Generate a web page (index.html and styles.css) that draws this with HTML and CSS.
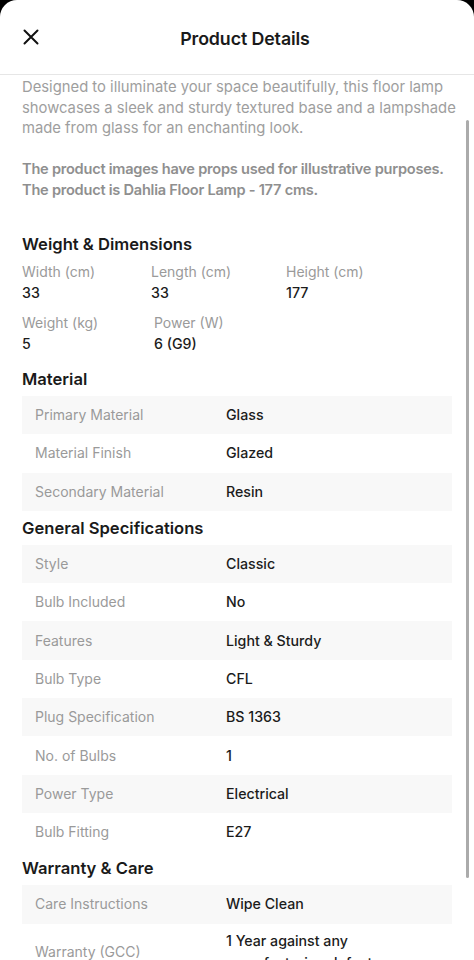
FILE: index.html
```html
<!DOCTYPE html>
<html lang="en">
<head>
<meta charset="utf-8">
<title>Product Details</title>
<link rel="stylesheet" href="styles.css">
</head>
<body>
<div class="sheet">
  <header class="topbar">
    <button class="close" aria-label="Close">
      <svg width="16" height="16" viewBox="0 0 16 16"><path d="M1.5 1.5 L14.5 14.5 M14.5 1.5 L1.5 14.5" stroke="#111" stroke-width="2" stroke-linecap="round"/></svg>
    </button>
    <h1 class="title">Product Details</h1>
  </header>
  <main class="content">
    <p class="desc">Designed to illuminate your space beautifully, this floor lamp showcases a sleek and sturdy textured base and a lampshade made from glass for an enchanting look.<br><br><b>The product images have props used for illustrative purposes. The product is Dahlia Floor Lamp - 177 cms.</b></p>

    <h2 class="section-title first">Weight &amp; Dimensions</h2>
    <div class="dims">
      <div class="dim-row">
        <div class="dim w1"><span class="dlabel">Width (cm)</span><span class="dval">33</span></div>
        <div class="dim w2"><span class="dlabel">Length (cm)</span><span class="dval">33</span></div>
        <div class="dim"><span class="dlabel">Height (cm)</span><span class="dval">177</span></div>
      </div>
      <div class="dim-row">
        <div class="dim w3"><span class="dlabel">Weight (kg)</span><span class="dval">5</span></div>
        <div class="dim"><span class="dlabel">Power (W)</span><span class="dval">6 (G9)</span></div>
      </div>
    </div>

    <h2 class="section-title">Material</h2>
    <div class="table">
      <div class="row"><span class="k">Primary Material</span><span class="v">Glass</span></div>
      <div class="row"><span class="k">Material Finish</span><span class="v">Glazed</span></div>
      <div class="row"><span class="k">Secondary Material</span><span class="v">Resin</span></div>
    </div>

    <h2 class="section-title">General Specifications</h2>
    <div class="table">
      <div class="row"><span class="k">Style</span><span class="v">Classic</span></div>
      <div class="row"><span class="k">Bulb Included</span><span class="v">No</span></div>
      <div class="row"><span class="k">Features</span><span class="v">Light &amp; Sturdy</span></div>
      <div class="row"><span class="k">Bulb Type</span><span class="v">CFL</span></div>
      <div class="row"><span class="k">Plug Specification</span><span class="v">BS 1363</span></div>
      <div class="row"><span class="k">No. of Bulbs</span><span class="v">1</span></div>
      <div class="row"><span class="k">Power Type</span><span class="v">Electrical</span></div>
      <div class="row"><span class="k">Bulb Fitting</span><span class="v">E27</span></div>
    </div>

    <h2 class="section-title">Warranty &amp; Care</h2>
    <div class="table">
      <div class="row"><span class="k">Care Instructions</span><span class="v">Wipe Clean</span></div>
      <div class="row tall"><span class="k">Warranty (GCC)</span><span class="v">1 Year against any manufacturing defects</span></div>
    </div>
  </main>
  <div class="scrollbar"></div>
</div>
</body>
</html>
```

FILE: styles.css
```css
* { box-sizing: border-box; }
html, body { margin: 0; padding: 0; }
body {
  background: #000;
  font-family: Inter, "Noto Sans", "Liberation Sans", sans-serif;
  height: 960px;
  overflow: hidden;
}
.sheet {
  position: relative;
  background: #fff;
  border-radius: 17px 17px 0 0;
  height: 960px;
  overflow: hidden;
}
.topbar {
  position: relative;
  height: 75px;
  border-bottom: 1px solid #e6e6e6;
  display: flex;
  align-items: center;
  justify-content: center;
}
.close {
  position: absolute;
  left: 22px;
  top: 28px;
  width: 18px;
  height: 18px;
  padding: 0;
  border: 0;
  background: none;
  display: flex;
  align-items: center;
  justify-content: center;
}
.title {
  margin: 3px 0 0 16px;
  font-size: 17.8px;
  font-weight: 600;
  color: #1a1a1a;
  letter-spacing: -0.1px;
}
.content {
  padding: 2px 22px 0 22px;
}
.desc {
  margin: 0 -10px 0 0;
  font-size: 14.8px;
  line-height: 20.5px;
  color: #9e9e9e;
}
.desc b { font-weight: 600; color: #8f8f8f; letter-spacing: -0.25px; font-size: 14.6px; }
.section-title {
  margin: 0;
  height: 34px;
  line-height: 34px;
  font-size: 16.6px;
  font-weight: 600;
  color: #1a1a1a;
}
.section-title.first { margin-top: 27px; }
.dims {
  display: flex;
  flex-direction: column;
  gap: 8px;
  margin-bottom: 7px;
}
.dim-row { display: flex; }
.dim { display: flex; flex-direction: column; }
.w1 { width: 129px; }
.w2 { width: 135px; }
.w3 { width: 132px; }
.dlabel {
  font-size: 14px;
  line-height: 21px;
  color: #9a9a9a;
}
.dval {
  font-size: 14.2px;
  line-height: 22px;
  font-weight: 500;
  color: #1c1c1c;
}
.table { display: flex; flex-direction: column; }
.row {
  display: grid;
  grid-template-columns: 191px 1fr;
  align-items: center;
  padding: 8.15px 24px 8.15px 13px;
  min-height: 38.3px;
}
.row.tall { padding-top: 6.5px; }
.row:nth-child(odd) { background: #f8f8f8; }
.k {
  font-size: 14px;
  line-height: 22px;
  color: #9a9a9a;
}
.v {
  font-size: 14.2px;
  line-height: 22px;
  font-weight: 500;
  color: #1c1c1c;
}
.scrollbar {
  position: absolute;
  right: 5px;
  top: 120px;
  width: 3px;
  height: 758px;
  border-radius: 2px;
  background: #ababab;
}
```
